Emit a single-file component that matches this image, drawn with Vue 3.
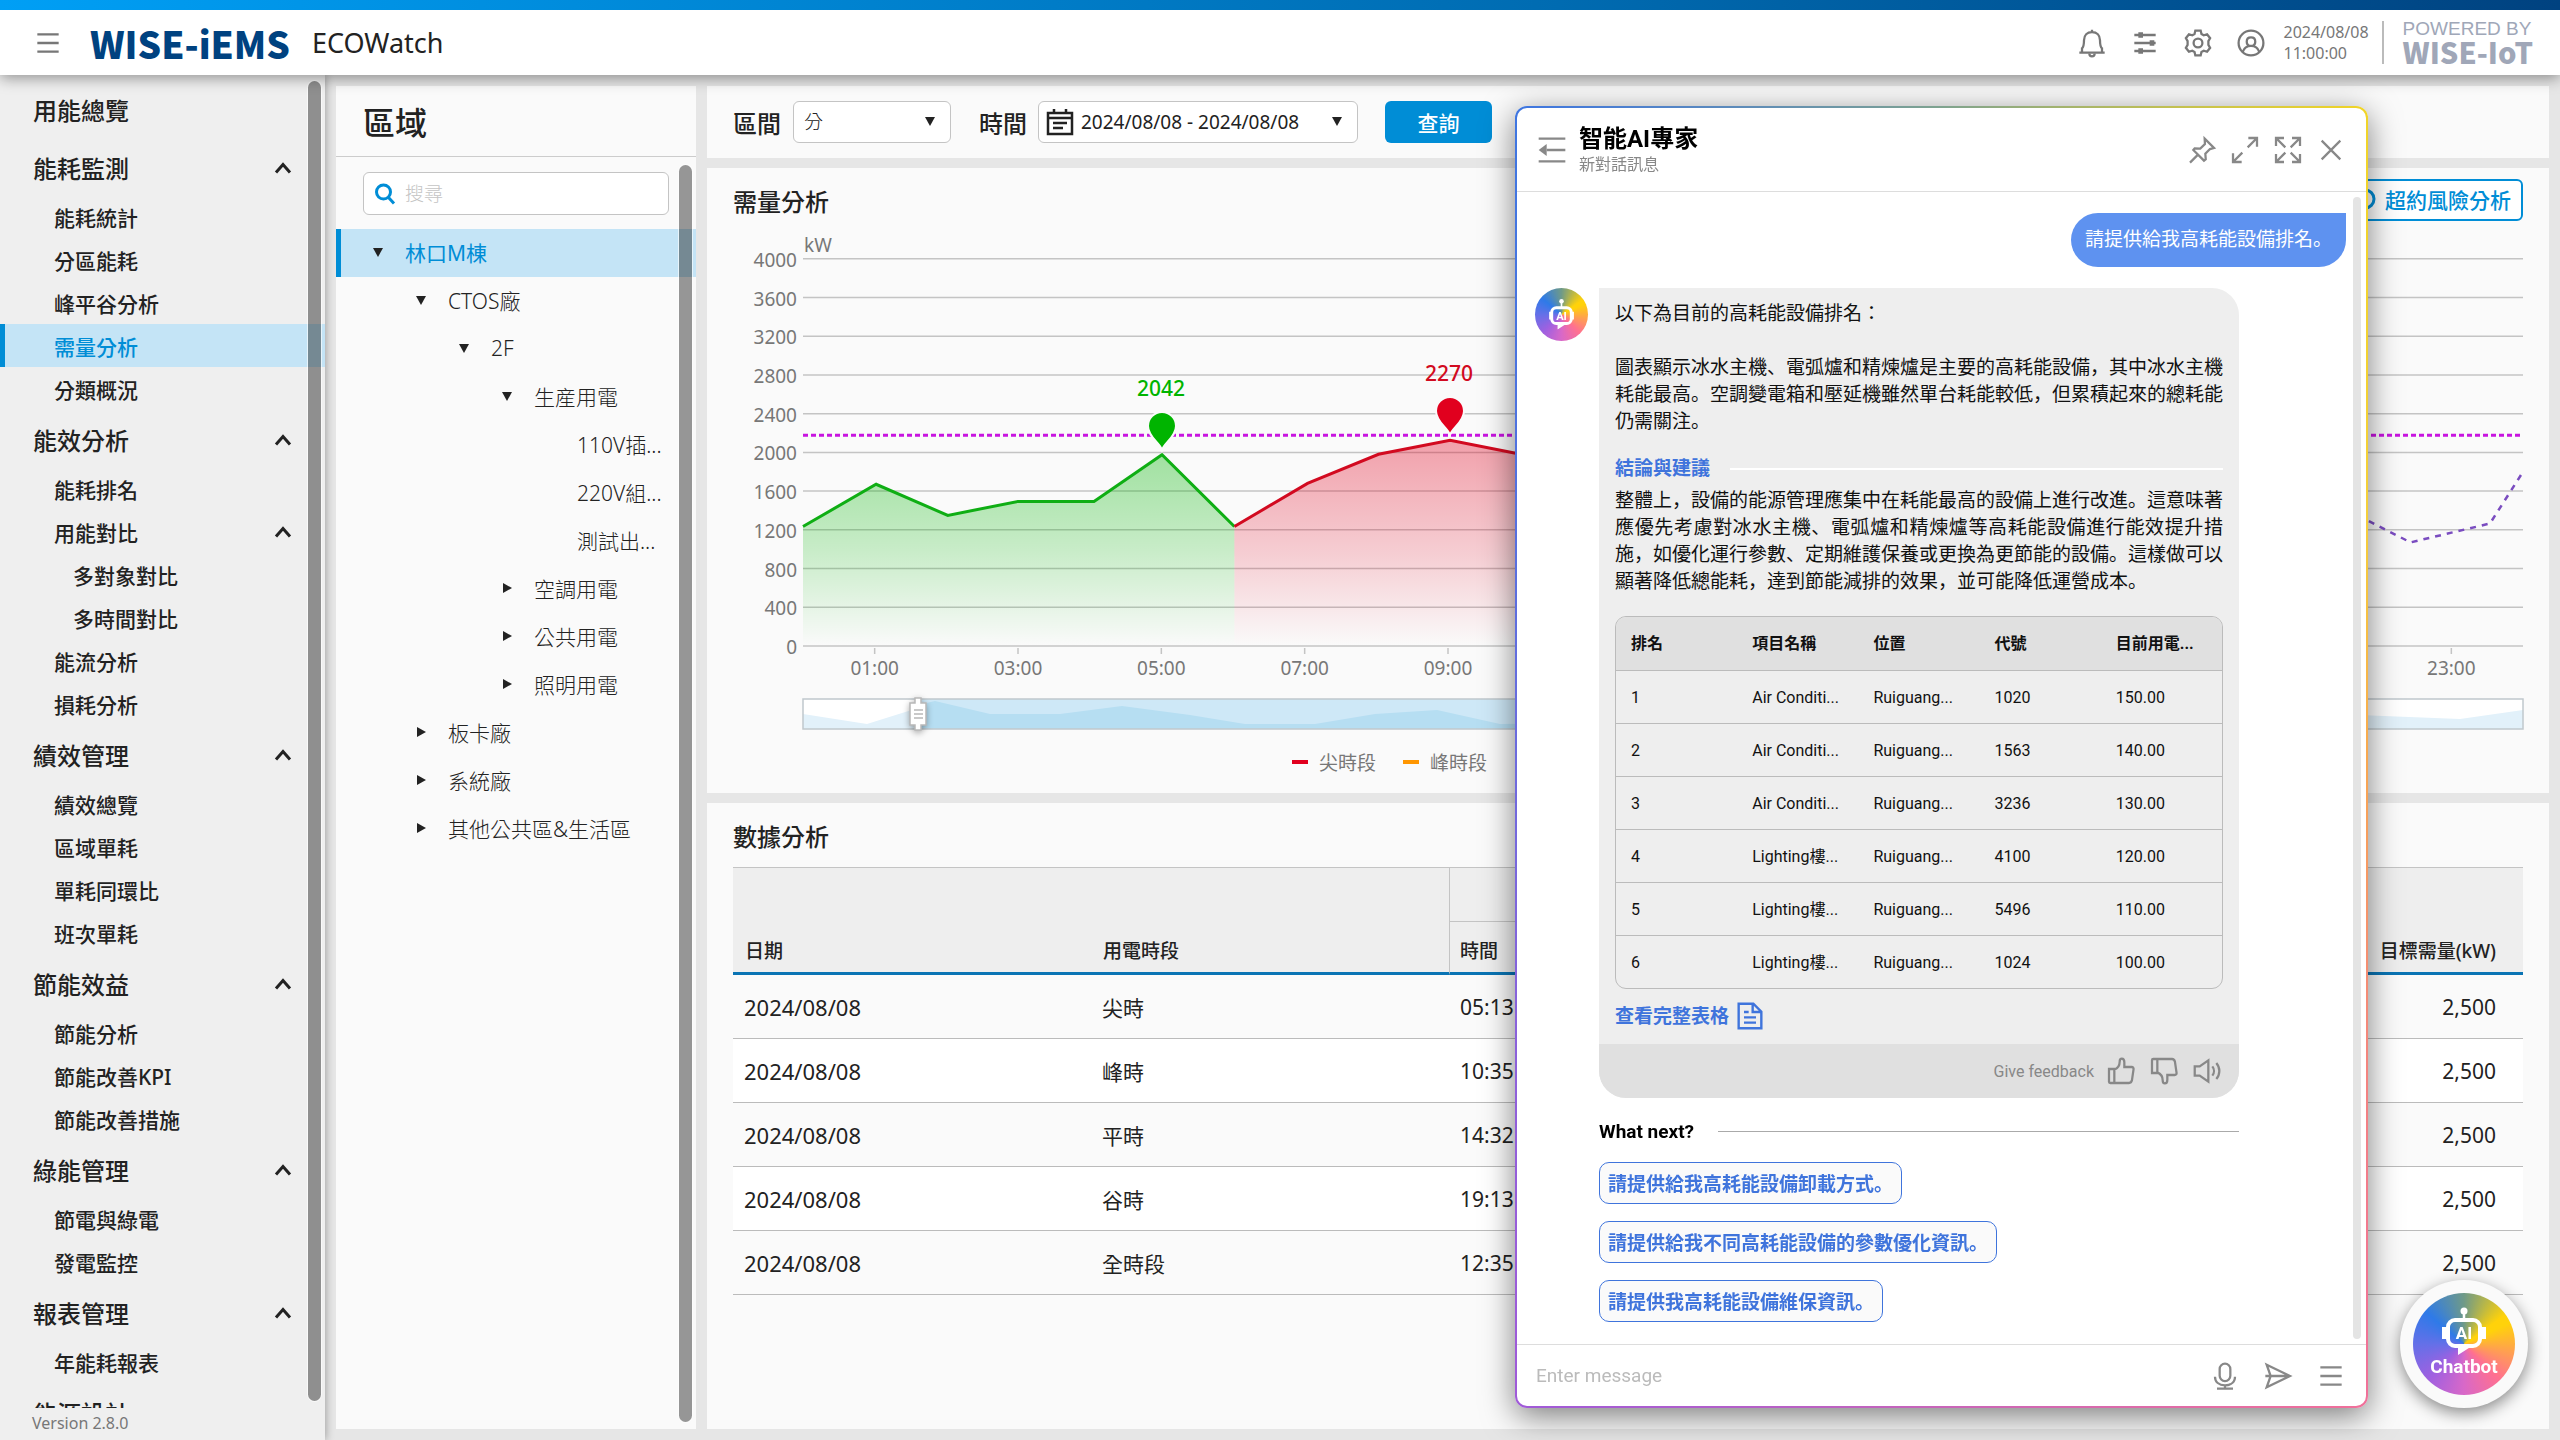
<script setup>
import { ref } from 'vue'

const search = ref('')
const message = ref('')
const interval = ref('minute')

const nav = [
  { title: '用能總覽' },
  {
    title: '能耗監測',
    items: [
      { label: '能耗統計' },
      { label: '分區能耗' },
      { label: '峰平谷分析' },
      { label: '需量分析', active: true },
      { label: '分類概況' }
    ]
  },
  {
    title: '能效分析',
    items: [
      { label: '能耗排名' },
      { label: '用能對比', open: true },
      { label: '多對象對比', sub: true },
      { label: '多時間對比', sub: true },
      { label: '能流分析' },
      { label: '損耗分析' }
    ]
  },
  {
    title: '績效管理',
    items: [{ label: '績效總覽' }, { label: '區域單耗' }, { label: '單耗同環比' }, { label: '班次單耗' }]
  },
  {
    title: '節能效益',
    items: [{ label: '節能分析' }, { label: '節能改善KPI' }, { label: '節能改善措施' }]
  },
  { title: '綠能管理', items: [{ label: '節電與綠電' }, { label: '發電監控' }] },
  { title: '報表管理', items: [{ label: '年能耗報表' }] },
  { title: '能源設計' }
]

const tree = [
  { label: '林口M棟', level: 0, state: 'open', active: true },
  { label: 'CTOS廠', level: 1, state: 'open' },
  { label: '2F', level: 2, state: 'open' },
  { label: '生産用電', level: 3, state: 'open' },
  { label: '110V插...', level: 4 },
  { label: '220V組...', level: 4 },
  { label: '測試出...', level: 4 },
  { label: '空調用電', level: 3, state: 'closed' },
  { label: '公共用電', level: 3, state: 'closed' },
  { label: '照明用電', level: 3, state: 'closed' },
  { label: '板卡廠', level: 1, state: 'closed' },
  { label: '系統廠', level: 1, state: 'closed' },
  { label: '其他公共區&生活區', level: 1, state: 'closed' }
]

/* chart scales: 24 hours across, 0 to 4000 kW upwards */
const x = (h) => 70 + (h * 1720) / 24
const y = (v) => 425 - v * 0.0968
const points = (list) => list.map(([h, v]) => `${x(h).toFixed(1)},${y(v).toFixed(1)}`).join(' ')
const area = (list) =>
  `${x(list[0][0])},${y(0)} ${points(list)} ${x(list[list.length - 1][0])},${y(0)}`

const gridValues = [4000, 3600, 3200, 2800, 2400, 2000, 1600, 1200, 800, 400, 0]
const hours = [1, 3, 5, 7, 9, 23]
const offPeak = [[0, 1235], [1.02, 1670], [2.02, 1349], [3, 1494], [4.06, 1494], [5.01, 1975], [6.02, 1235]]
const peak = [[6.02, 1235], [7.04, 1680], [8.03, 1980], [9.03, 2124], [10.05, 1975]]
const forecast = [[21.85, 1290], [22.43, 1070], [23.54, 1266], [24, 1800]]
const pad = (h) => String(h).padStart(2, '0') + ':00'

const rows = [
  ['2024/08/08', '尖時', '05:13', '2,500'],
  ['2024/08/08', '峰時', '10:35', '2,500'],
  ['2024/08/08', '平時', '14:32', '2,500'],
  ['2024/08/08', '谷時', '19:13', '2,500'],
  ['2024/08/08', '全時段', '12:35', '2,500']
]

const ranking = [
  ['1', 'Air Conditi...', 'Ruiguang...', '1020', '150.00'],
  ['2', 'Air Conditi...', 'Ruiguang...', '1563', '140.00'],
  ['3', 'Air Conditi...', 'Ruiguang...', '3236', '130.00'],
  ['4', 'Lighting樓...', 'Ruiguang...', '4100', '120.00'],
  ['5', 'Lighting樓...', 'Ruiguang...', '5496', '110.00'],
  ['6', 'Lighting樓...', 'Ruiguang...', '1024', '100.00']
]

const suggestions = [
  '請提供給我高耗能設備卸載方式。',
  '請提供給我不同高耗能設備的參數優化資訊。',
  '請提供我高耗能設備維保資訊。'
]
</script>

<template>
  <div class="app">
    <header class="topbar">
      <button class="icon-btn" aria-label="Menu">
        <svg viewBox="0 0 24 24"><path d="M4 5.500h16M4 12h16M4 18.500h16" /></svg>
      </button>
      <strong class="logo">WISE-iEMS</strong>
      <span class="product">ECOWatch</span>
      <div class="tools">
        <button class="icon-btn" aria-label="Notifications">
          <svg viewBox="0 0 24 24">
            <path d="M12 2v1.600M2.500 19.200h19M4.500 19v-3c1.300-1 1.500-3 1.500-6 0-4 2.400-6.200 6-6.200s6 2.200 6 6.200c0 3 .2 5 1.500 6v3" />
            <path d="M10 19.800c0 1.300.8 2.200 2 2.200s2-.9 2-2.200" />
          </svg>
        </button>
        <button class="icon-btn" aria-label="Filters">
          <svg viewBox="0 0 24 24">
            <path d="M4 6h16M4 12h16M4 18h16" />
            <path class="knob" d="M7 6h3.500M15.500 12H19M7 18h3.500" />
          </svg>
        </button>
        <button class="icon-btn" aria-label="Settings">
          <svg viewBox="0 0 24 24">
            <circle cx="12" cy="12" r="3.300" />
            <path d="M10 2.700h4l.6 2.600 1.700.9 2.500-.8 2.300 3-1.300 2.200v2.800l1.300 2.200-2.300 3-2.500-.8-1.700.9-.6 2.600h-4l-.6-2.600-1.700-.9-2.500.8-2.300-3 1.300-2.200v-2.800L2.900 8.400l2.300-3 2.500.8 1.700-.9z" />
          </svg>
        </button>
        <button class="icon-btn" aria-label="Account">
          <svg viewBox="0 0 24 24">
            <circle cx="12" cy="12" r="9.300" />
            <path d="M12 14.200c-2 0-3.200-1.200-3.200-3.200S10 7.800 12 7.800s3.200 1.200 3.200 3.200-1.200 3.200-3.200 3.200zM5.800 18.600c1-2.800 3-4.400 6.200-4.400s5.200 1.600 6.200 4.400" />
          </svg>
        </button>
      </div>
      <time class="clock">2024/08/08<br />11:00:00</time>
      <div class="powered">
        <span>POWERED BY</span>
        <strong>WISE-IoT</strong>
      </div>
    </header>

    <div class="body">
      <aside class="sidebar">
        <nav class="nav">
          <section v-for="group in nav" :key="group.title">
            <h2 class="nav-title">
              {{ group.title }}
              <svg v-if="group.items" class="chevron" viewBox="0 0 18 12"><path d="M2 10.500l7-8 7 8" /></svg>
            </h2>
            <ul v-if="group.items">
              <li v-for="item in group.items" :key="item.label">
                <a href="#" class="nav-item" :class="{ active: item.active, sub: item.sub }">
                  {{ item.label }}
                  <svg v-if="item.open" class="chevron" viewBox="0 0 18 12"><path d="M2 10.500l7-8 7 8" /></svg>
                </a>
              </li>
            </ul>
          </section>
        </nav>
        <footer class="version">Version 2.8.0</footer>
        <i class="thumb side-thumb"></i>
      </aside>

      <section class="panel region">
        <h1>區域</h1>
        <div class="region-body">
          <label class="search">
            <svg viewBox="0 0 24 24"><circle cx="10.500" cy="10" r="7" /><path d="M15.500 15.500L21 21.500" /></svg>
            <input v-model="search" type="text" placeholder="搜尋" aria-label="搜尋" />
          </label>
          <ul class="tree">
            <li
              v-for="node in tree"
              :key="node.label"
              class="node"
              :class="{ active: node.active }"
              :style="{ paddingLeft: 31 + node.level * 43 + 'px' }"
            >
              <svg class="caret" viewBox="0 0 12 12">
                <path v-if="node.state === 'open'" d="M1 2h10L6 11z" />
                <path v-else-if="node.state === 'closed'" d="M2 1v10l9-5z" />
              </svg>
              {{ node.label }}
            </li>
          </ul>
          <i class="thumb tree-thumb"></i>
        </div>
      </section>

      <main class="main">
        <form class="panel filters" @submit.prevent>
          <label for="interval">區間</label>
          <div class="field select">
            <select id="interval" v-model="interval">
              <option value="minute">分</option>
            </select>
            <svg class="caret" viewBox="0 0 12 12"><path d="M1 1h10L6 10z" /></svg>
          </div>
          <label for="range" class="second">時間</label>
          <button id="range" type="button" class="field range">
            <svg class="calendar" viewBox="0 0 28 28">
              <path d="M2 5h24v21H2zM2 10h24M8 1v5M20 1v5" />
              <path d="M7 15h14M7 20h10" />
            </svg>
            <span>2024/08/08 - 2024/08/08</span>
            <svg class="caret" viewBox="0 0 12 12"><path d="M1 1h10L6 10z" /></svg>
          </button>
          <button class="query">查詢</button>
        </form>

        <section class="panel chart">
          <div class="chart-head">
            <h3>需量分析</h3>
            <button class="risk">
              <svg viewBox="0 0 24 24"><circle cx="12" cy="12" r="9" /></svg>
              超約風險分析
            </button>
          </div>
          <svg class="plot" viewBox="0 0 1790 520" role="img" aria-label="需量分析">
            <defs>
              <linearGradient id="gGreen" x1="0" y1="0" x2="0" y2="1">
                <stop offset="0" stop-color="#00b400" stop-opacity=".36" />
                <stop offset=".5" stop-color="#00b400" stop-opacity=".2" />
                <stop offset="1" stop-color="#00b400" stop-opacity="0" />
              </linearGradient>
              <linearGradient id="gRed" x1="0" y1="0" x2="0" y2="1">
                <stop offset="0" stop-color="#e1001e" stop-opacity=".36" />
                <stop offset=".55" stop-color="#e1001e" stop-opacity=".18" />
                <stop offset="1" stop-color="#e1001e" stop-opacity="0" />
              </linearGradient>
            </defs>
            <g class="axis">
              <text x="71" y="31">kW</text>
              <g v-for="v in gridValues" :key="v">
                <path class="grid" :d="`M70 ${y(v)}H1790`" />
                <text x="64" :y="y(v) + 8" text-anchor="end">{{ v }}</text>
              </g>
              <g v-for="h in hours" :key="h">
                <path class="grid" :d="`M${x(h)} 427v6`" />
                <text :x="x(h)" y="454" text-anchor="middle">{{ pad(h) }}</text>
              </g>
            </g>
            <polygon :points="area(offPeak)" fill="url(#gGreen)" />
            <polygon :points="area(peak)" fill="url(#gRed)" />
            <path class="limit" :d="`M70 ${y(2176)}H1790`" />
            <polyline class="line" :points="points(offPeak)" stroke="#0fae14" />
            <polyline class="line" :points="points(peak)" stroke="#d20a20" />
            <polyline class="forecast" :points="points(forecast)" />
            <g class="pin" fill="#00b400">
              <path d="M429 229c-2-7-14-13-14-24a14 14 0 0 1 28 0c0 11-12 17-14 24z" />
              <text x="428" y="175">2042</text>
            </g>
            <g class="pin" fill="#e1001e">
              <path d="M717 214c-2-7-14-13-14-24a14 14 0 0 1 28 0c0 11-12 17-14 24z" />
              <text x="716" y="160" class="deep">2270</text>
            </g>
            <g>
              <rect x="70" y="478" width="1720" height="30" fill="#fff" />
              <path fill="#e2f1fa" d="M70 493L134 503 185 487V508H70zM1600 493L1727 498 1790 489V508H1600z" />
              <rect x="185" y="478" width="1415" height="30" fill="#cee8f7" />
              <path fill="#b6def2" d="M185 484L202 480 257 493H327L389 485 457 494 512 503H582L642 493 704 489 767 503 1600 493V508H185z" />
              <rect x="70" y="478" width="1720" height="30" fill="none" stroke="#c0c8cd" stroke-width="1.500" />
              <g class="handle">
                <path d="M182 477h6v5h5v22h-5v5h-6v-5h-5v-22h5z" />
                <path d="M181 489h9M181 493h9M181 497h9" stroke="#aaa" stroke-width="1.500" />
              </g>
            </g>
          </svg>
          <div class="legend">
            <span><i class="red"></i>尖時段</span>
            <span><i class="orange"></i>峰時段</span>
          </div>
        </section>

        <section class="panel data">
          <h3>數據分析</h3>
          <table class="grid-table">
            <thead>
              <tr>
                <th rowspan="2">日期</th>
                <th rowspan="2">用電時段</th>
                <th colspan="2" class="group"></th>
                <th rowspan="2" class="num">目標需量(kW)</th>
              </tr>
              <tr>
                <th class="edge">時間</th>
                <th></th>
              </tr>
            </thead>
            <tbody>
              <tr v-for="row in rows" :key="row[1]">
                <td class="date">{{ row[0] }}</td>
                <td>{{ row[1] }}</td>
                <td>{{ row[2] }}</td>
                <td></td>
                <td class="num">{{ row[3] }}</td>
              </tr>
            </tbody>
          </table>
        </section>
      </main>
    </div>

    <section class="chat" aria-label="智能AI專家">
      <header class="chat-head">
        <button class="icon-btn" aria-label="Collapse">
          <svg viewBox="0 0 24 24"><path d="M2 3.500h20M8 12h14M2 20.500h20" /><path class="fill" d="M8 7.500v9L2 12z" /></svg>
        </button>
        <div class="chat-title">
          <h2>智能AI專家</h2>
          <p>新對話訊息</p>
        </div>
        <button class="icon-btn" aria-label="Pin">
          <svg viewBox="0 0 24 24"><path d="M14 3.500l7 7-3 .8-3.500 3.500.3 4.200-1.300 1L5.500 12l1-1.200 4.200.2L14.200 7.500zM9 15.500L3 21.500" /></svg>
        </button>
        <button class="icon-btn" aria-label="Expand">
          <svg viewBox="0 0 24 24"><path d="M14.500 3H21v6.500M21 3l-7 7M9.500 21H3v-6.500M3 21l7-7" /></svg>
        </button>
        <button class="icon-btn" aria-label="Full screen">
          <svg viewBox="0 0 24 24"><path d="M15 3h6v6M21 3l-7 7M9 21H3v-6M3 21l7-7M9 3H3v6M3 3l7 7M15 21h6v-6M21 21l-7-7" /></svg>
        </button>
        <button class="icon-btn" aria-label="Close">
          <svg viewBox="0 0 24 24"><path d="M5 5l14 14M19 5L5 19" /></svg>
        </button>
      </header>

      <div class="chat-body">
        <p class="mine">請提供給我高耗能設備排名。</p>
        <div class="reply">
          <span class="avatar rainbow">
            <svg class="bot" viewBox="0 0 48 52">
              <circle cx="24" cy="5" r="3.500" fill="#fff" /><path d="M24 6v8" stroke="#fff" stroke-width="2.500" />
              <rect x="9" y="15" width="30" height="24" rx="7" fill="none" stroke="#fff" stroke-width="4.500" />
              <path d="M5 21h3v12H5zM40 21h3v12h-3zM18 39h14l-14 9z" fill="#fff" />
              <text x="24" y="33" font-size="17">AI</text>
            </svg>
          </span>
          <div class="thread">
            <article class="bubble">
              <div class="content">
                <p>以下為目前的高耗能設備排名：</p>
                <p class="spaced">圖表顯示冰水主機、電弧爐和精煉爐是主要的高耗能設備，其中冰水主機耗能最高。空調變電箱和壓延機雖然單台耗能較低，但累積起來的總耗能仍需關注。</p>
                <h4>結論與建議</h4>
                <p class="justify">整體上，設備的能源管理應集中在耗能最高的設備上進行改進。這意味著應優先考慮對冰水主機、電弧爐和精煉爐等高耗能設備進行能效提升措施，如優化運行參數、定期維護保養或更換為更節能的設備。這樣做可以顯著降低總能耗，達到節能減排的效果，並可能降低運營成本。</p>
                <table class="ranking">
                  <thead>
                    <tr><th>排名</th><th>項目名稱</th><th>位置</th><th>代號</th><th>目前用電...</th></tr>
                  </thead>
                  <tbody>
                    <tr v-for="r in ranking" :key="r[0]">
                      <td v-for="(cell, i) in r" :key="i">{{ cell }}</td>
                    </tr>
                  </tbody>
                </table>
                <a href="#" class="full-table">
                  查看完整表格
                  <svg viewBox="0 0 24 24"><path d="M3.500 2.800h11l6 6v12.400h-17zM14 3v6h6M7.500 9h3.500M7.500 13h9M7.500 17h9" /></svg>
                </a>
              </div>
              <footer class="feedback">
                Give feedback
                <button class="icon-btn" aria-label="Like">
                  <svg viewBox="0 0 24 24"><path d="M3 10.500h4V21H4a1 1 0 0 1-1-1zM7 11c2.500-1 4-3 4-6 0-1.500.6-2.300 1.600-2.300 1.300 0 1.900 1 1.900 2.800V9h5.500c1 0 1.600.8 1.400 1.800L20.200 19c-.3 1.300-1 2-2.200 2H7" /></svg>
                </button>
                <button class="icon-btn" aria-label="Dislike">
                  <svg viewBox="0 0 24 24"><path d="M3 13.500h4V3H4a1 1 0 0 0-1 1zM7 13c2.500 1 4 3 4 6 0 1.500.6 2.300 1.600 2.300 1.300 0 1.900-1 1.900-2.800V15h5.500c1 0 1.600-.8 1.400-1.800L20.200 5c-.3-1.300-1-2-2.200-2H7" /></svg>
                </button>
                <button class="icon-btn" aria-label="Read aloud">
                  <svg viewBox="0 0 24 24"><path d="M2.800 8.500h3.700L13 4v16l-6.500-4.500H2.800zM16 8.500c1.600 2 1.600 5 0 7M19 6c3 3.500 3 8.500 0 12" /></svg>
                </button>
              </footer>
            </article>
            <h5>What next?</h5>
            <div class="chips">
              <button v-for="s in suggestions" :key="s">{{ s }}</button>
            </div>
          </div>
        </div>
        <i class="chat-thumb"></i>
      </div>

      <form class="composer" @submit.prevent>
        <input v-model="message" type="text" placeholder="Enter message" aria-label="Enter message" />
        <button type="button" class="icon-btn" aria-label="Voice">
          <svg viewBox="0 0 24 24"><rect x="8" y="2.800" width="8" height="13" rx="4" /><path d="M4.500 12.500c0 4 3 6.500 7.500 6.500s7.500-2.500 7.500-6.500M12 19v2.500M6 21.500h12" /></svg>
        </button>
        <button class="icon-btn" aria-label="Send">
          <svg viewBox="0 0 24 24"><path d="M3.500 3.500L21 12 3.500 20.500 6.500 12zM2.500 12H21" /></svg>
        </button>
        <button type="button" class="icon-btn" aria-label="More">
          <svg viewBox="0 0 24 24"><path d="M4 5.500h16M4 12h16M4 18.500h16" /></svg>
        </button>
      </form>
    </section>

    <button class="fab">
      <span class="rainbow">
        <svg class="bot" viewBox="0 0 48 52">
          <circle cx="24" cy="5" r="3.500" fill="#fff" /><path d="M24 6v8" stroke="#fff" stroke-width="2.500" />
          <rect x="8" y="14" width="32" height="26" rx="7" fill="none" stroke="#fff" stroke-width="4" />
          <path d="M2 21h4v12H2zM42 21h4v12h-4zM18 40h14l-14 9z" fill="#fff" />
          <text x="24" y="33" font-size="17">AI</text>
        </svg>
        Chatbot
      </span>
    </button>
  </div>
</template>

<style>
body {
  background: #e6e6e6;
}
</style>

<style scoped>
* {
  box-sizing: border-box;
  margin: 0;
}
.app {
  height: 100vh;
  display: flex;
  flex-direction: column;
  overflow: hidden;
  background: #e6e6e6;
  color: #222;
  font-family: "Noto Sans", "Noto Sans CJK TC", sans-serif;
  font-size: 19px;
}
button,
input,
select {
  font: inherit;
  color: inherit;
  border: 0;
  background: none;
  padding: 0;
  outline: 0;
}
ul {
  list-style: none;
  padding: 0;
}
a {
  color: inherit;
  text-decoration: none;
}
.icon-btn {
  flex: none;
  width: 32px;
  height: 32px;
  color: #777;
}
.icon-btn svg {
  display: block;
  width: 32px;
  height: 32px;
  fill: none;
  stroke: currentColor;
  stroke-width: 1.7;
}
.icon-btn .knob {
  stroke-width: 4;
}
.icon-btn .fill {
  fill: currentColor;
  stroke: none;
}

/* top bar */
.topbar {
  position: relative;
  z-index: 3;
  flex: none;
  display: flex;
  align-items: center;
  height: 75px;
  padding: 10px 27px 0 32px;
  background: linear-gradient(90deg, #009ff5, #006cb2 60%, #004280) top / 100% 10px no-repeat, #fff;
  box-shadow: 0 3px 14px rgba(0, 0, 0, 0.4);
}
.logo {
  margin-left: 26px;
  color: #004280;
  font: 900 37px/54px "Noto Sans CJK TC", sans-serif;
}
.product {
  margin-left: 22px;
  font-size: 27px;
}
.tools {
  display: flex;
  gap: 21px;
  margin-left: auto;
}
.clock {
  margin: 0 13px 0 16px;
  color: #777;
  font-size: 16px;
  line-height: 21px;
}
.powered {
  display: flex;
  flex-direction: column;
  height: 43px;
  padding-left: 19px;
  border-left: 2px solid #bbb;
  color: #a0a7b8;
}
.powered span {
  font: 19px/16px "Liberation Sans", sans-serif;
}
.powered strong {
  font: 900 29px/29px "Noto Sans CJK TC", sans-serif;
}

/* page columns */
.body {
  flex: 1;
  min-height: 0;
  display: flex;
  gap: 11px;
  padding-right: 11px;
}
.panel {
  background: #fafafa;
}
.thumb {
  position: absolute;
  width: 13px;
  border-radius: 7px;
  background: rgba(0, 0, 0, 0.4);
  box-shadow: 0 0 0 1px rgba(255, 255, 255, 0.6);
}

/* sidebar */
.sidebar {
  position: relative;
  flex: none;
  display: flex;
  flex-direction: column;
  width: 325px;
  background: #efefef;
  box-shadow: 1px 0 8px rgba(0, 0, 0, 0.3);
}
.nav {
  flex: 1;
  min-height: 0;
  overflow: hidden;
  padding-top: 4px;
}
.nav-title {
  display: flex;
  align-items: center;
  justify-content: space-between;
  height: 57px;
  padding: 2px 33px 0 33px;
  font-size: 24px;
  font-weight: 500;
}
.nav section:first-child .nav-title {
  height: 59px;
}
.nav-item {
  display: flex;
  align-items: center;
  justify-content: space-between;
  height: 43px;
  padding: 0 33px 0 44px;
  border-left: 5px solid transparent;
  font-size: 21px;
  font-weight: 500;
}
.nav-item {
  padding-left: 49px;
}
.nav-item.sub {
  padding-left: 68px;
}
.nav-item.active {
  border-left-color: #008dd6;
  background: #c4e4f6;
  color: #008dd6;
}
.chevron {
  width: 18px;
  height: 12px;
  fill: none;
  stroke: #222;
  stroke-width: 3;
}
.version {
  flex: none;
  height: 32px;
  padding-left: 32px;
  color: #777;
  font-size: 16px;
  line-height: 31px;
}
.side-thumb {
  top: 6px;
  bottom: 39px;
  right: 4px;
}

/* region tree */
.region {
  position: relative;
  flex: none;
  display: flex;
  flex-direction: column;
  width: 360px;
  margin: 11px 0;
}
.region h1 {
  height: 71px;
  padding: 3px 27px 0;
  border-bottom: 1px solid #ccc;
  font-size: 32px;
  font-weight: 500;
  line-height: 68px;
}
.region-body {
  position: relative;
  flex: 1;
  padding-top: 15px;
}
.search {
  display: flex;
  align-items: center;
  height: 43px;
  margin: 0 27px 14px;
  padding: 0 9px;
  gap: 8px;
  border: 1px solid #c4c4c4;
  border-radius: 6px;
  background: #fff;
}
.search svg {
  width: 24px;
  height: 24px;
  fill: none;
  stroke: #008dd6;
  stroke-width: 3;
}
.search input {
  flex: 1;
  min-width: 0;
}
.search input::placeholder {
  color: #c4c4c4;
  font-weight: 300;
}
.node {
  display: flex;
  align-items: center;
  height: 48px;
  gap: 21px;
  padding-bottom: 2px;
  border-left: 5px solid transparent;
  font-size: 21px;
  font-weight: 300;
  white-space: nowrap;
}
.node.active {
  border-left-color: #008dd6;
  background: #c4e4f6;
  color: #008dd6;
  font-weight: 400;
}
.caret {
  width: 12px;
  height: 12px;
  fill: #222;
}
.tree-thumb {
  top: 8px;
  bottom: 7px;
  right: 4px;
}

/* main column */
.main {
  flex: 1;
  min-width: 0;
  display: flex;
  flex-direction: column;
  gap: 10px;
  padding: 11px 0;
}
.filters {
  flex: none;
  display: flex;
  align-items: center;
  height: 72px;
  padding: 0 26px;
}
.filters label {
  font-size: 24px;
  font-weight: 500;
  margin-right: 12px;
}
.filters .second {
  margin: 0 11px 0 28px;
}
.field {
  display: flex;
  align-items: center;
  height: 42px;
  border: 1px solid #c4c4c4;
  border-radius: 6px;
  background: #fff;
}
.select {
  width: 158px;
  position: relative;
}
.select select {
  width: 100%;
  height: 100%;
  padding-left: 10px;
  appearance: none;
  font-weight: 300;
}
.select .caret {
  position: absolute;
  right: 14px;
  pointer-events: none;
}
.range {
  width: 320px;
  padding: 0 14px 0 7px;
}
.range .caret {
  margin-left: auto;
}
.calendar {
  width: 28px;
  height: 28px;
  margin-right: 7px;
  fill: none;
  stroke: #222;
  stroke-width: 2.5;
}
.query {
  width: 107px;
  height: 42px;
  margin-left: 27px;
  border-radius: 6px;
  background: #008dd6;
  color: #fff;
  font-size: 21px;
  font-weight: 500;
}
.chart {
  flex: none;
  padding: 11px 26px 10px;
}
.chart-head {
  display: flex;
  align-items: center;
  justify-content: space-between;
  height: 42px;
}
h3 {
  font-size: 24px;
  font-weight: 500;
}
.risk {
  display: flex;
  align-items: center;
  gap: 8px;
  height: 42px;
  padding: 0 10px 2px;
  border: 2px solid #008dd6;
  border-radius: 6px;
  background: #fff;
  color: #008dd6;
  font-size: 21px;
  font-weight: 500;
}
.risk svg {
  width: 24px;
  height: 24px;
  fill: none;
  stroke: currentColor;
  stroke-width: 3;
}
.plot {
  display: block;
  width: 100%;
  overflow: visible;
}
.axis text {
  fill: #777;
  font-size: 19px;
}
.grid {
  stroke: #c4c4c4;
  stroke-width: 1.5;
}
.line {
  fill: none;
  stroke-width: 3;
}
.limit {
  stroke: #c814e0;
  stroke-width: 3;
  stroke-dasharray: 5 3;
}
.forecast {
  fill: none;
  stroke: #7a4cc0;
  stroke-width: 2.5;
  stroke-dasharray: 6 6;
}
.pin path {
  stroke: #fafafa;
  stroke-width: 2;
}
.pin text {
  font-size: 21px;
  font-weight: 500;
  text-anchor: middle;
}
.pin .deep {
  fill: #d20a20;
}
.handle path {
  fill: #fff;
  stroke: #b8b8b8;
  stroke-width: 1.5;
}
.handle {
  filter: drop-shadow(0 2px 3px rgba(0, 0, 0, 0.35));
}
.legend {
  display: flex;
  gap: 27px;
  height: 42px;
  padding-left: 559px;
  align-items: center;
  color: #777;
}
.legend span {
  display: flex;
  align-items: center;
  gap: 11px;
}
.legend i {
  width: 16px;
  height: 4px;
}
.red {
  background: #e1001e;
}
.orange {
  background: #ff9600;
}

/* data table */
.data {
  flex: 1;
  padding: 0 26px;
}
.data h3 {
  height: 64px;
  line-height: 67px;
}
.grid-table {
  width: 100%;
  table-layout: fixed;
  border-collapse: separate;
  border-spacing: 0;
}
.grid-table th {
  height: 54px;
  padding: 0 12px 8px;
  border-top: 1px solid #c4c4c4;
  border-bottom: 3px solid #0a74b4;
  background: #eee;
  font-weight: 500;
  text-align: left;
  vertical-align: bottom;
}
.grid-table .group {
  border-left: 1px solid #c4c4c4;
  border-bottom: 0;
}
.grid-table .edge {
  border-left: 1px solid #c4c4c4;
  padding-left: 10px;
}
.grid-table td {
  height: 64px;
  padding: 0 11px;
  border-bottom: 1px solid #bbb;
  font-size: 21px;
}
.grid-table .date {
  font-size: 22px;
}
.grid-table tbody tr:nth-child(even) {
  background: #fff;
}
.grid-table .num {
  padding-right: 27px;
  text-align: right;
}

/* chat window */
.chat {
  position: fixed;
  z-index: 5;
  top: 106px;
  right: 192px;
  bottom: 32px;
  width: 853px;
  display: flex;
  flex-direction: column;
  border: 2px solid transparent;
  border-radius: 12px;
  background: linear-gradient(#fff, #fff) padding-box,
    conic-gradient(#7fa38f, #f0d428 33deg, #f4cf3a 60deg, #f8a850 90deg, #f0709a 147deg, #a05ad8 213deg, #7468dc 260deg, #3f76e0 327deg, #7fa38f) border-box;
  box-shadow: 0 8px 32px rgba(0, 0, 0, 0.5);
  color: #111;
  font-family: Roboto, "Noto Sans CJK JP", sans-serif;
}
.chat .icon-btn {
  color: #888;
}
.chat-head {
  flex: none;
  display: flex;
  align-items: center;
  gap: 11px;
  height: 84px;
  padding: 0 19px;
  border-bottom: 1px solid #ddd;
}
.chat-title {
  flex: 1;
}
.chat-title h2 {
  color: #000;
  font-size: 24px;
  line-height: 30px;
}
.chat-title p {
  color: #888;
  font-size: 16px;
  line-height: 22px;
}
.chat-body {
  position: relative;
  flex: 1;
  min-height: 0;
  display: flex;
  flex-direction: column;
  gap: 21px;
  padding: 21px 20px 0 18px;
}
.mine {
  align-self: flex-end;
  padding: 0 14px;
  border-radius: 27px 0 27px 27px;
  background: #5e92f0;
  color: #fff;
  line-height: 54px;
}
.reply {
  display: flex;
  align-items: flex-start;
  gap: 11px;
}
.rainbow {
  border-radius: 50%;
  background: conic-gradient(#6f9a88, #ffd20a 55deg, #ffd20a 65deg, #ffa050 100deg, #ff7090 135deg, #d868c8 180deg, #a060e0 225deg, #6470e8 270deg, #2e7ae8 310deg, #6f9a88);
}
.avatar {
  flex: none;
  display: flex;
  justify-content: center;
  align-items: center;
  width: 53px;
  height: 53px;
}
.avatar .bot {
  width: 33px;
  height: 34px;
}
.bot text {
  fill: #fff;
  font-family: Roboto, sans-serif;
  font-weight: 700;
  text-anchor: middle;
}
.thread {
  width: 640px;
}
.bubble {
  border-radius: 0 27px 27px 27px;
  background: #eee;
  overflow: hidden;
}
.content {
  padding: 12px 16px;
  line-height: 27px;
}
.content .spaced {
  margin-top: 27px;
}
.content .justify {
  text-align: justify;
}
.content h4 {
  display: flex;
  align-items: center;
  gap: 20px;
  margin: 20px 0 5px;
  color: #3f74dc;
  font-size: 19px;
  font-weight: 700;
}
.content h4::after {
  content: "";
  flex: 1;
  height: 2px;
  background: #fff;
}
.ranking {
  width: 100%;
  margin: 21px 0 11px;
  table-layout: fixed;
  border: 1px solid #bbb;
  border-radius: 11px;
  border-collapse: separate;
  border-spacing: 0;
  overflow: hidden;
  font-size: 16px;
}
.ranking th,
.ranking td {
  height: 53px;
  padding: 0 15px;
  text-align: left;
  white-space: nowrap;
}
.ranking th {
  background: #e0e0e0;
}
.ranking td {
  border-top: 1px solid #bbb;
}
.full-table {
  display: flex;
  align-items: center;
  gap: 5px;
  height: 32px;
  color: #3f74dc;
  font-weight: 700;
}
.full-table svg {
  width: 32px;
  height: 32px;
  fill: none;
  stroke: currentColor;
  stroke-width: 1.8;
}
.feedback {
  display: flex;
  align-items: center;
  justify-content: flex-end;
  gap: 11px;
  height: 54px;
  padding-right: 16px;
  background: #e0e0e0;
  color: #888;
  font-size: 16px;
}
h5 {
  display: flex;
  align-items: center;
  gap: 24px;
  margin: 20px 0 17px;
  color: #000;
  font-size: 19px;
  line-height: 27px;
}
h5::after {
  content: "";
  flex: 1;
  height: 1px;
  background: #aaa;
}
.chips {
  display: flex;
  flex-direction: column;
  align-items: flex-start;
  gap: 17px;
}
.chips button {
  height: 42px;
  padding: 0 8px 2px;
  border: 1px solid #3f74dc;
  border-radius: 10px;
  background: #fafafa;
  color: #3f74dc;
  font-weight: 700;
}
.chat-thumb {
  position: absolute;
  top: 5px;
  bottom: 5px;
  right: 5px;
  width: 8px;
  border-radius: 4px;
  background: #e4e4e4;
}
.composer {
  flex: none;
  display: flex;
  align-items: center;
  gap: 21px;
  height: 62px;
  padding: 0 19px;
  border-top: 1px solid #ddd;
}
.composer input {
  flex: 1;
}
.composer input::placeholder {
  color: #bbb;
}

/* floating chatbot button */
.fab {
  position: fixed;
  z-index: 6;
  right: 32px;
  bottom: 32px;
  width: 128px;
  height: 128px;
  padding: 13px;
  border-radius: 50%;
  background: #fafafa;
  box-shadow: 0 5px 16px rgba(0, 0, 0, 0.45);
}
.fab .rainbow {
  display: flex;
  flex-direction: column;
  align-items: center;
  height: 102px;
  padding-top: 13px;
  color: #fff;
  font: 700 19px/18px Roboto, sans-serif;
}
.fab .bot {
  width: 52px;
  height: 52px;
}
</style>
